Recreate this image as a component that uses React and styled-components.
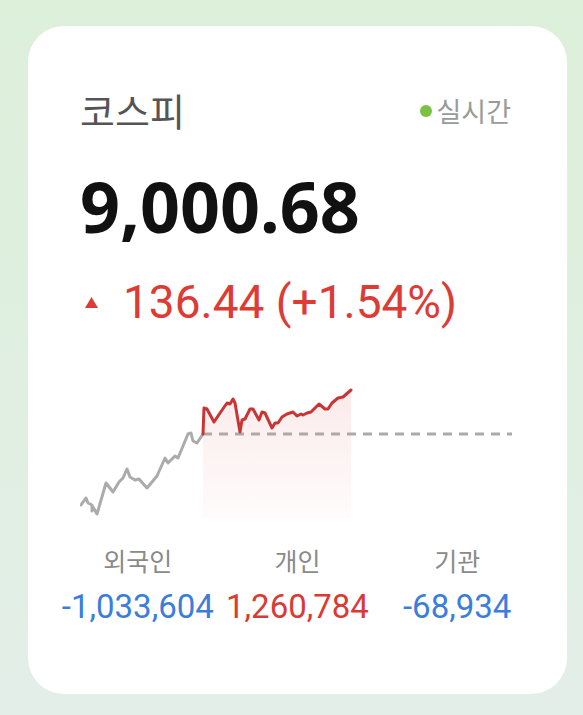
import React from 'react';
import styled, { createGlobalStyle } from 'styled-components';

const GlobalStyle = createGlobalStyle`
  html, body {
    margin: 0;
    padding: 0;
  }
  body {
    background: linear-gradient(180deg, #ddf0da 0%, #e0efe2 60%, #e3eee8 100%);
    min-height: 715px;
    font-family: 'Noto Sans', 'Noto Sans CJK KR', sans-serif;
  }
`;

const Page = styled.div`
  padding: 26px 16px 21px 28px;
`;

const Card = styled.div`
  width: 539px;
  box-sizing: border-box;
  background: #ffffff;
  border-radius: 36px;
  padding: 62px 0 67px;
  display: flex;
  flex-direction: column;
`;

const Section = styled.div`
  padding: 0 55px 0 52px;
`;

const Header = styled(Section)`
  display: flex;
  justify-content: space-between;
  align-items: center;
  padding-right: 56px;
`;

const Title = styled.h2`
  margin: 0;
  font-family: 'Noto Sans CJK KR', sans-serif;
  font-size: 38px;
  line-height: 44px;
  font-weight: 400;
  color: #555555;
`;

const LiveBadge = styled.div`
  display: flex;
  align-items: center;
  gap: 4px;
  font-family: 'Noto Sans CJK KR', sans-serif;
  font-size: 27px;
  line-height: 32px;
  color: #9a9a9a;
  margin-top: 2px;

  &::before {
    content: '';
    width: 12px;
    height: 12px;
    border-radius: 50%;
    background: #7cc142;
  }
`;

const Price = styled(Section)`
  margin-top: 39px;
  font-family: 'Noto Sans', sans-serif;
  font-size: 70px;
  line-height: 70px;
  font-weight: 700;
  color: #111111;
`;

const Change = styled(Section)`
  margin-top: 37px;
  display: flex;
  align-items: center;
  gap: 25px;
  padding-left: 57px;
  font-family: Roboto, sans-serif;
  font-size: 46px;
  line-height: 48px;
  color: ${props => (props.up ? '#dd3b35' : '#3b7ddd')};
`;

const Chart = styled(Section)`
  margin-top: 56px;
  height: 140px;

  svg {
    display: block;
  }
`;

const Stats = styled.div`
  margin-top: 22px;
  padding: 0 30px;
  display: grid;
  grid-template-columns: repeat(3, 1fr);
`;

const Stat = styled.div`
  display: flex;
  flex-direction: column;
  align-items: center;
`;

const StatLabel = styled.div`
  font-family: 'Noto Sans CJK KR', sans-serif;
  font-size: 25px;
  line-height: 32px;
  color: #8a8a8a;
`;

const StatValue = styled.div`
  margin-top: 11px;
  font-family: Roboto, sans-serif;
  font-size: 33px;
  line-height: 40px;
  white-space: nowrap;
  color: ${props => (props.negative ? '#3b7ddd' : '#d93a35')};
`;

// intraday points, previous session (gray) then today (red)
const prevSession = [
  [81, 505], [86, 498], [88, 503], [92, 505], [92, 511], [93, 507], [97, 514],
  [106, 483], [113, 492], [119, 482], [123, 478], [127, 469], [130, 477],
  [135, 480], [139, 479], [147, 488], [157, 476], [165, 458], [168, 463],
  [175, 456], [178, 458], [183, 446], [188, 434], [191, 433], [193, 441],
  [197, 443], [203, 434],
];

const today = [
  [203, 434], [204, 408], [207, 409], [214, 422], [220, 413], [227, 403],
  [230, 404], [233, 399], [235, 403], [240, 432], [242, 420], [245, 419],
  [250, 409], [253, 409], [259, 420], [262, 412], [265, 413], [272, 428],
  [275, 423], [278, 423], [282, 417], [287, 414], [290, 413], [293, 412],
  [297, 416], [301, 414], [303, 415], [307, 413], [311, 412], [315, 408],
  [319, 404], [325, 409], [328, 409], [332, 403], [338, 398], [343, 397],
  [351, 390],
];

const toPoints = pts => pts.map(([x, y]) => `${x},${y}`).join(' ');

function Sparkline() {
  const fillPts = [...today, [351, 518], [203, 518]];
  return (
    <svg width="432" height="140" viewBox="80 382 432 140">
      <defs>
        <linearGradient id="todayFill" x1="0" y1="0" x2="0" y2="1">
          <stop offset="0%" stopColor="#e25555" stopOpacity="0.12" />
          <stop offset="100%" stopColor="#e25555" stopOpacity="0.02" />
        </linearGradient>
      </defs>
      <polygon points={toPoints(fillPts)} fill="url(#todayFill)" />
      <line
        x1="203" y1="434" x2="512" y2="434"
        stroke="#aaaaaa" strokeWidth="3" strokeDasharray="9 7"
      />
      <polyline
        points={toPoints(prevSession)}
        fill="none" stroke="#ababab" strokeWidth="3"
        strokeLinejoin="round" strokeLinecap="round"
      />
      <polyline
        points={toPoints(today)}
        fill="none" stroke="#c93434" strokeWidth="3"
        strokeLinejoin="round" strokeLinecap="round"
      />
    </svg>
  );
}

function UpTriangle() {
  return (
    <svg width="13" height="11" viewBox="0 0 13 11">
      <path d="M6.5 0 L13 11 L0 11 Z" fill="#dd3b35" />
    </svg>
  );
}

const investors = [
  { label: '외국인', value: '-1,033,604' },
  { label: '개인', value: '1,260,784' },
  { label: '기관', value: '-68,934' },
];

export default function App() {
  return (
    <Page>
      <GlobalStyle />
      <Card>
        <Header>
          <Title>코스피</Title>
          <LiveBadge>실시간</LiveBadge>
        </Header>
        <Price>9,000.68</Price>
        <Change up>
          <UpTriangle />
          <span>136.44 (+1.54%)</span>
        </Change>
        <Chart>
          <Sparkline />
        </Chart>
        <Stats>
          {investors.map(item => (
            <Stat key={item.label}>
              <StatLabel>{item.label}</StatLabel>
              <StatValue negative={item.value.startsWith('-')}>{item.value}</StatValue>
            </Stat>
          ))}
        </Stats>
      </Card>
    </Page>
  );
}
